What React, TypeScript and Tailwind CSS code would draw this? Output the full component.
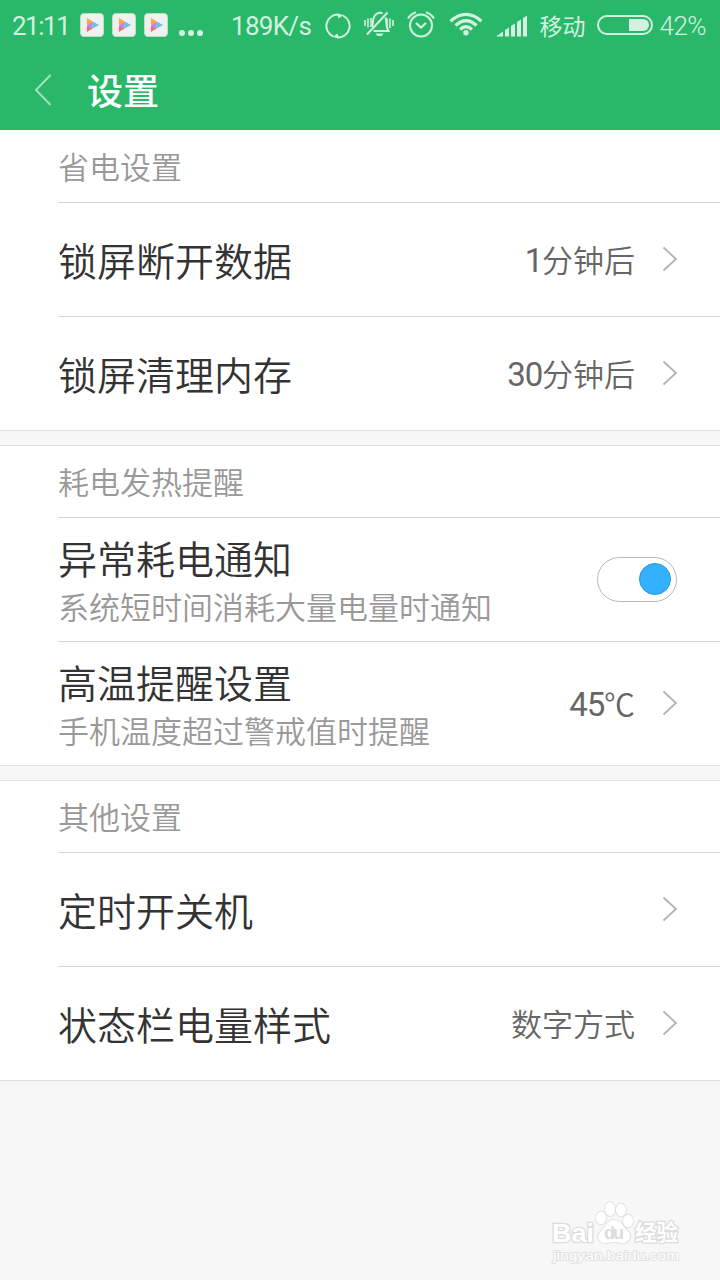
import React, { useState } from 'react';
import clsx from 'clsx';

const AppBadge = () => (
    <svg width="24" height="24" viewBox="0 0 24 24" className="shrink-0">
        <rect x="0.5" y="0.5" width="23" height="23" rx="3.5" fill="#f0f0f0" stroke="#b5e3c8" />
        <path d="M7 5L12.500 8.500L7 12Z" fill="#f9ab2f" />
        <path d="M7 12L12.500 15.500L7 19Z" fill="#ef6b84" />
        <path d="M12.500 8.500L19 12L12.500 15.500Z" fill="#62c4d3" />
        <path d="M7 12L12.500 8.200V15.800Z" fill="#b98ae0" />
    </svg>
);

const SyncIcon = () => (
    <svg width="26" height="26" viewBox="0 0 26 26" className="shrink-0" fill="none" stroke="#d4f0e0" strokeWidth="2">
        <path d="M8 23.400A11.500 11.500 0 0 1 13.500 1.500" />
        <path d="M18 2.600A11.500 11.500 0 0 1 12.500 24.500" />
        <path d="M12 0.500L18.500 2L13.500 5.500Z" fill="#d4f0e0" stroke="none" />
        <path d="M14 25.500L7.500 24L12.500 20.500Z" fill="#d4f0e0" stroke="none" />
    </svg>
);

const SilentIcon = () => (
    <svg width="30" height="26" viewBox="0 0 30 26" className="shrink-0" fill="none" stroke="#d4f0e0" strokeWidth="2">
        <path d="M1 9V15M4 7.500V16.500M7 7V16M23 7.500V17M26 7.500V17M29 9V15" strokeWidth="1.600" />
        <path d="M8 16C9.500 13 8 8.500 10.500 5C12.500 2 16 1 18.500 2.500" />
        <path d="M21.500 6.500C23 10 21.500 15 24.500 20H9.500" />
        <path d="M3 23.500L23.500 1.500" />
        <path d="M11.500 22.500H19.500L17.500 25H13.500Z" fill="#d4f0e0" stroke="none" />
    </svg>
);

const AlarmIcon = () => (
    <svg width="28" height="27" viewBox="0 0 28 27" className="shrink-0" fill="none" stroke="#d4f0e0" strokeWidth="2">
        <circle cx="14" cy="14.500" r="11" />
        <path d="M9 12L14 16.500L19 12" strokeWidth="2.300" />
        <path d="M1 7.500Q3.500 3 9 1.200M27 7.500Q24.500 3 19 1.200" />
    </svg>
);

const WifiIcon = () => (
    <svg width="34" height="24" viewBox="0 0 34 24" className="shrink-0" fill="none" stroke="#d4f0e0" strokeWidth="3.200">
        <path d="M1.500 9.200Q17 -4.400 32.500 9.200" />
        <path d="M6.500 13.500Q17 4 27.500 13.500" />
        <path d="M11 17.500Q17 12 23 17.500" />
        <circle cx="17" cy="20.800" r="2.700" fill="#d4f0e0" stroke="none" />
    </svg>
);

const SignalIcon = () => (
    <svg width="32" height="22" viewBox="0 0 32 22" className="shrink-0" fill="#d4f0e0">
        <path d="M0 21.500L7 16.500V21.500ZM9 15L13 12.500V21.500H9ZM15 11L19 8.500V21.500H15ZM21 7L25 4.500V21.500H21ZM27 3L31 0.500V21.500H27Z" />
    </svg>
);

const BatteryIcon = () => (
    <svg width="56" height="20" viewBox="0 0 56 20" className="shrink-0">
        <rect x="1" y="1" width="54" height="18" rx="9" fill="none" stroke="#d4f0e0" strokeWidth="2" />
        <path d="M32 4H46A6 6 0 0 1 46 16H32Z" fill="#d4f0e0" />
    </svg>
);

const Chevron = () => (
    <svg width="16" height="26" viewBox="0 0 16 26" className="mb-px ml-[27px] shrink-0" fill="none" stroke="#b3b3b3" strokeWidth="1.800">
        <path d="M1.500 1.500L14 13L1.500 24.500" />
    </svg>
);

function StatusBar() {
    return (
        <div className="flex h-[51px] items-center text-[26px] leading-[30px] whitespace-nowrap text-[#d4f0e0]">
            <span className="ml-3 w-[57px] shrink-0 text-[26px] tracking-[-1.5px]">21:11</span>
            <div className="mb-px ml-[11px] flex shrink-0 gap-2">
                <AppBadge />
                <AppBadge />
                <AppBadge />
            </div>
            <div className="mt-[15px] ml-[11px] flex w-6 shrink-0 justify-between">
                <i className="size-1.5 rounded-full bg-[#d4f0e0]" />
                <i className="size-1.5 rounded-full bg-[#d4f0e0]" />
                <i className="size-1.5 rounded-full bg-[#d4f0e0]" />
            </div>
            <span className="ml-7 w-[93.5px] shrink-0 tracking-[-0.7px]">189K/s</span>
            <SyncIcon />
            <div className="mb-[3px] ml-[13px] flex"><SilentIcon /></div>
            <div className="mb-[3px] ml-[13px] flex"><AlarmIcon /></div>
            <div className="mb-[3px] ml-[14px] flex"><WifiIcon /></div>
            <div className="ml-[13px] flex"><SignalIcon /></div>
            <span className="mt-1 ml-3 w-[45px] shrink-0 text-[23px]">移动</span>
            <div className="mb-px ml-3 flex"><BatteryIcon /></div>
            <span className="ml-[7px] text-[26px] font-light tracking-[-0.5px]">42%</span>
        </div>
    );
}

function Section({ title, children }: { title: string; children: React.ReactNode }) {
    return (
        <section className="border-b border-[#e0e0e0] bg-white">
            <h2 className="h-[71px] pt-[15px] pl-[58px] text-[31px] leading-[46px] font-[350] text-[#999]">{title}</h2>
            <div className="pl-[58px]">{children}</div>
        </section>
    );
}

interface RowProps {
    title: string;
    desc?: string;
    value?: string;
    children?: React.ReactNode;
}

function Row({ title, desc, value, children }: RowProps) {
    // digits are set a little larger than the unit that follows them
    const [, num, unit] = value?.match(/^(\d*)(.*)$/) ?? [];

    return (
        <div className={clsx('flex items-center border-t border-[#d6d6d6] pr-[42px]', desc ? 'h-[124px]' : 'h-[114px]')}>
            <div className={clsx('flex-1', desc ? 'pt-[11px]' : 'pt-1.5')}>
                <div className="text-[39px] leading-[48px] font-[350] text-[#333]">{title}</div>
                {desc && <div className="text-[31px] leading-[48px] font-[350] text-[#999]">{desc}</div>}
            </div>
            {value && (
                <span className="mt-1 text-[31px] leading-[46px] font-[350] text-[#666]">
                    {num && <span className="text-[33px] font-normal tracking-[-1.2px]">{num}</span>}
                    {unit}
                </span>
            )}
            {children ?? <Chevron />}
        </div>
    );
}

function Toggle() {
    const [on, setOn] = useState(true);
    return (
        <button
            onClick={() => setOn(!on)}
            className={clsx('mr-px flex h-[45px] w-20 items-center rounded-full border border-[#b8b8b8] px-[5px] pb-0.5', on ? 'justify-end' : 'justify-start')}
        >
            <span className={clsx('size-8 rounded-full border', on ? 'border-[#2b93da] bg-[#33b1ff]' : 'border-[#aaa] bg-[#ccc]')} />
        </button>
    );
}

function Watermark() {
    return (
        <svg
            width="136"
            height="66"
            viewBox="0 0 136 66"
            className="absolute right-[36px] bottom-[14px] font-['Liberation_Sans','Noto_Sans_CJK_SC',sans-serif]"
            fill="#fff"
            stroke="#dcdcdc"
            strokeWidth="1.500"
            paintOrder="stroke"
        >
            <text x="4" y="42" fontSize="26" fontWeight="700" textLength="42" lengthAdjust="spacingAndGlyphs" strokeWidth="2.500">Bai</text>
            <ellipse cx="53" cy="18" rx="5" ry="6.500" />
            <ellipse cx="62" cy="9" rx="5" ry="7" />
            <ellipse cx="73" cy="10" rx="5" ry="6.500" />
            <ellipse cx="80" cy="21" rx="5" ry="6.500" />
            <path d="M66 20C73 20 75 27 80 31C85 36 81 43 75 43C70 43 70 42 66 42C62 42 61 43 57 43C50 43 48 36 53 31C58 27 59 20 66 20Z" />
            <text x="56" y="39" fontSize="18" fontWeight="700" fill="#dcdcdc" stroke="none" textLength="20">du</text>
            <text x="87" y="40" fontSize="21.500" fontWeight="700" strokeWidth="2.500">经验</text>
            <text x="5" y="60" fontSize="13" textLength="126" lengthAdjust="spacingAndGlyphs" stroke="#e2e2e2" strokeWidth="1.800">jingyan.baidu.com</text>
        </svg>
    );
}

export default function App() {
    return (
        <div className="relative h-[1280px] w-[720px] overflow-hidden bg-[#f7f7f7] font-['Roboto','Noto_Sans_CJK_SC',sans-serif]">
            <header className="h-[130px] bg-[#29b869]">
                <StatusBar />
                <div className="flex h-[79px] items-center pb-0.5 pl-[34px] text-white">
                    <svg width="18" height="32" viewBox="0 0 18 32" fill="none" stroke="#a4dfbf" strokeWidth="2">
                        <path d="M16.500 1L2 16L16.500 31" />
                    </svg>
                    <h1 className="mt-[7px] ml-[35px] text-[36px] leading-[48px] font-medium">设置</h1>
                </div>
            </header>

            <main className="flex flex-col gap-[14px]">
                <div className="bg-white pt-px">
                    <Section title="省电设置">
                        <Row title="锁屏断开数据" value="1分钟后" />
                        <Row title="锁屏清理内存" value="30分钟后" />
                    </Section>
                </div>
                <div className="border-t border-[#e0e0e0]">
                    <Section title="耗电发热提醒">
                        <Row title="异常耗电通知" desc="系统短时间消耗大量电量时通知">
                            <Toggle />
                        </Row>
                        <Row title="高温提醒设置" desc="手机温度超过警戒值时提醒" value="45℃" />
                    </Section>
                </div>
                <div className="border-t border-[#e0e0e0]">
                    <Section title="其他设置">
                        <Row title="定时开关机" />
                        <Row title="状态栏电量样式" value="数字方式" />
                    </Section>
                </div>
            </main>

            <Watermark />
        </div>
    );
}
